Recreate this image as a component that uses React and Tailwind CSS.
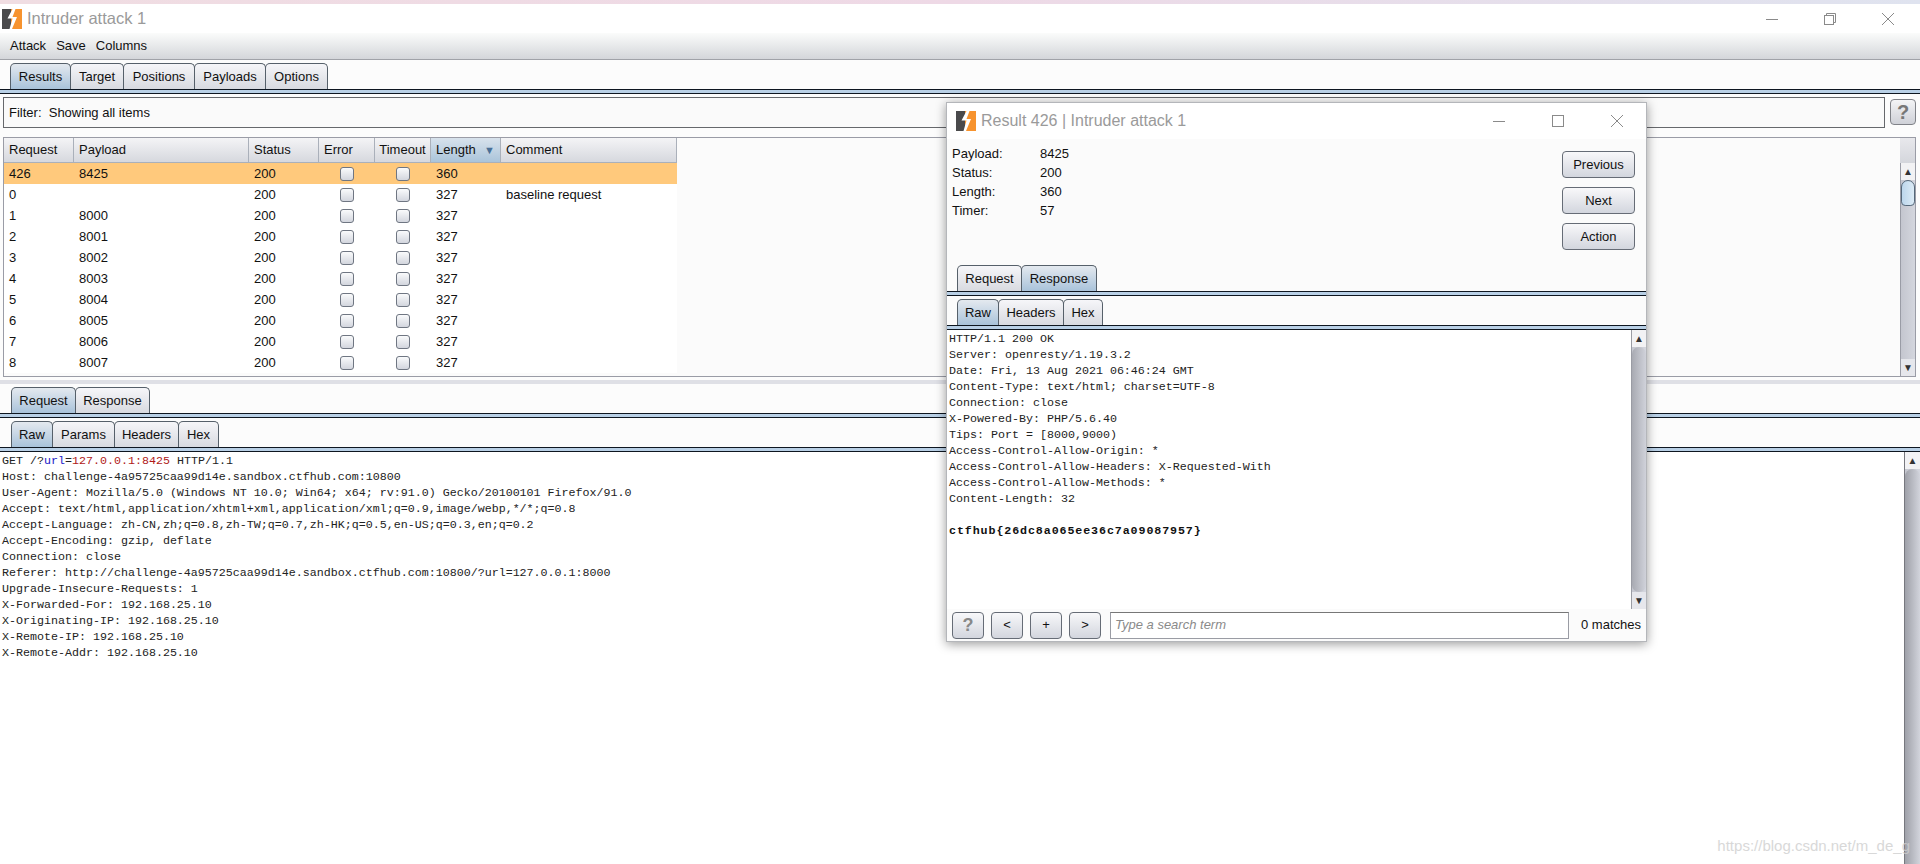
const sans = "font-['Liberation_Sans',Arial,sans-serif]";

function Logo({ className }) {
  return (
    <svg className={className} viewBox="0 0 20 20" aria-hidden="true">
      <rect x="0" y="0" width="9" height="20" fill="#4a4a4c" />
      <path d="M9 0H20V20H9Z" fill="#f7932e" />
      <path d="M10.5 0 L5.5 9.5 L10.5 9.5 L7.5 20 L10 20 L15 8 L10.5 8 L13.5 0 Z" fill="#fff" />
    </svg>
  );
}

function Ctrl({ kind }) {
  const s = "#8a8a8a";
  return (
    <svg width="14" height="14" viewBox="0 0 14 14" fill="none" stroke={s} strokeWidth="1" aria-hidden="true">
      {kind === "min" && <path d="M1 7.5H13" />}
      {kind === "max" && <rect x="1.5" y="1.5" width="11" height="11" />}
      {kind === "restore" && (
        <g>
          <rect x="1.5" y="3.5" width="9" height="9" />
          <path d="M3.5 3.5V1.5H12.5V10.5H10.5" />
        </g>
      )}
      {kind === "close" && <path d="M1 1L13 13M13 1L1 13" />}
    </svg>
  );
}

function Tab({ label, active, w }) {
  return (
    <div
      className={`${w} h-[26px] -mr-px border border-b-0 border-[#56606a] rounded-t-[5px] flex items-center justify-center text-[13px] text-[#111] ${
        active
          ? "bg-gradient-to-b from-[#e4e9ef] to-[#a9c3da]"
          : "bg-gradient-to-b from-[#f6f6f9] to-[#d8dae0]"
      }`}
    >
      {label}
    </div>
  );
}

function TabStrip({ tabs, pad }) {
  return (
    <div>
      <div className={`flex items-end ${pad}`}>
        {tabs.map((t) => (
          <Tab key={t.label} {...t} />
        ))}
      </div>
      <div className="h-[5px] bg-[#b9d0e6] border-y border-[#0e1620]" />
    </div>
  );
}

function Check() {
  return (
    <div className="w-[14px] h-[14px] rounded-[3px] border border-[#6f7682] bg-gradient-to-b from-[#fafbfc] to-[#d3d6de]" />
  );
}

function VScroll({ className, thumb, noBottom }) {
  return (
    <div className={`flex flex-col bg-gradient-to-r from-[#c4c6cf] to-[#d4d6de] ${className}`}>
      <div className="h-[17px] shrink-0 bg-[#f2f2f4] flex items-center justify-center text-[10px] leading-none text-[#333]">▲</div>
      {thumb}
      {!noBottom && (
        <div className="h-[17px] shrink-0 bg-[#e6e7ec] flex items-center justify-center text-[10px] leading-none text-[#333]">▼</div>
      )}
    </div>
  );
}

const rows = [
  ["0", "", "200", "327", "baseline request"],
  ["1", "8000", "200", "327", ""],
  ["2", "8001", "200", "327", ""],
  ["3", "8002", "200", "327", ""],
  ["4", "8003", "200", "327", ""],
  ["5", "8004", "200", "327", ""],
  ["6", "8005", "200", "327", ""],
  ["7", "8006", "200", "327", ""],
  ["8", "8007", "200", "327", ""],
];

const cols = "grid grid-cols-[70px_175px_70px_56px_56px_70px_176px] w-[673px]";

function HeadCell({ children, active, center }) {
  return (
    <div
      className={`h-[25px] flex items-center border-r border-b border-[#aab0ba] ${center ? "justify-center" : "pl-[5px]"} ${
        active
          ? "bg-gradient-to-b from-[#d8e2ec] to-[#aac4da] justify-between pr-[5px]"
          : "bg-gradient-to-b from-[#f4f4f6] to-[#d6d8de]"
      }`}
    >
      {children}
    </div>
  );
}

function Row({ r, selected }) {
  const c = "h-[21px] flex items-center pl-[5px]";
  return (
    <div className={`${cols} text-[13px] text-[#111] ${selected ? "bg-[#ffc97c]" : ""}`}>
      <div className={c}>{r[0]}</div>
      <div className={c}>{r[1]}</div>
      <div className={c}>{r[2]}</div>
      <div className="h-[21px] flex items-center justify-center"><Check /></div>
      <div className="h-[21px] flex items-center justify-center"><Check /></div>
      <div className={c}>{r[3]}</div>
      <div className={c}>{r[4]}</div>
    </div>
  );
}

function ToolBtn({ children, w, muted }) {
  return (
    <button
      className={`${w} h-[27px] rounded-[4px] border border-[#666c76] bg-gradient-to-b from-[#f8f8fa] to-[#d3d6de] flex items-center justify-center ${
        muted ? "text-[#888] font-bold text-[18px]" : "text-[13px] text-[#111]"
      }`}
    >
      {children}
    </button>
  );
}

const mono = "font-['Liberation_Mono','Courier_New',monospace] text-[11.67px] leading-[16px] text-[#222] whitespace-pre";

const respLines = [
  "HTTP/1.1 200 OK",
  "Server: openresty/1.19.3.2",
  "Date: Fri, 13 Aug 2021 06:46:24 GMT",
  "Content-Type: text/html; charset=UTF-8",
  "Connection: close",
  "X-Powered-By: PHP/5.6.40",
  "Tips: Port = [8000,9000)",
  "Access-Control-Allow-Origin: *",
  "Access-Control-Allow-Headers: X-Requested-With",
  "Access-Control-Allow-Methods: *",
  "Content-Length: 32",
  " ",
];

const reqLines = [
  "Host: challenge-4a95725caa99d14e.sandbox.ctfhub.com:10800",
  "User-Agent: Mozilla/5.0 (Windows NT 10.0; Win64; x64; rv:91.0) Gecko/20100101 Firefox/91.0",
  "Accept: text/html,application/xhtml+xml,application/xml;q=0.9,image/webp,*/*;q=0.8",
  "Accept-Language: zh-CN,zh;q=0.8,zh-TW;q=0.7,zh-HK;q=0.5,en-US;q=0.3,en;q=0.2",
  "Accept-Encoding: gzip, deflate",
  "Connection: close",
  "Referer: http://challenge-4a95725caa99d14e.sandbox.ctfhub.com:10800/?url=127.0.0.1:8000",
  "Upgrade-Insecure-Requests: 1",
  "X-Forwarded-For: 192.168.25.10",
  "X-Originating-IP: 192.168.25.10",
  "X-Remote-IP: 192.168.25.10",
  "X-Remote-Addr: 192.168.25.10",
];

function Popup() {
  return (
    <div className="absolute left-[946px] top-[102px] w-[701px] h-[540px] bg-[#fbfbfb] border border-[#b4b6ba] shadow-[0_2px_10px_rgba(0,0,0,0.4)] flex flex-col">
      <div className="h-[36px] shrink-0 bg-white flex items-center pl-[9px]">
        <Logo className="w-[20px] h-[20px]" />
        <span className="ml-[5px] text-[16px] text-[#9a9a9a]">Result 426 | Intruder attack 1</span>
        <div className="ml-auto flex items-center gap-[45px] pr-[22px]">
          <Ctrl kind="min" />
          <Ctrl kind="max" />
          <Ctrl kind="close" />
        </div>
      </div>
      <div className="h-[126px] shrink-0 flex justify-between pl-[5px] pr-[11px] pt-[5px] text-[13px] text-[#111]">
        <div className="grid grid-cols-[88px_auto] auto-rows-[19px] items-center h-[76px]">
          <span>Payload:</span><span>8425</span>
          <span>Status:</span><span>200</span>
          <span>Length:</span><span>360</span>
          <span>Timer:</span><span>57</span>
        </div>
        <div className="flex flex-col gap-[9px] pt-[7px]">
          <ToolBtn w="w-[73px]">Previous</ToolBtn>
          <ToolBtn w="w-[73px]">Next</ToolBtn>
          <ToolBtn w="w-[73px]">Action</ToolBtn>
        </div>
      </div>
      <TabStrip
        pad="pl-[10px]"
        tabs={[
          { label: "Request", w: "w-[65px]" },
          { label: "Response", active: true, w: "w-[76px]" },
        ]}
      />
      <div className="h-[3px] shrink-0" />
      <TabStrip
        pad="pl-[10px]"
        tabs={[
          { label: "Raw", active: true, w: "w-[42px]" },
          { label: "Headers", w: "w-[66px]" },
          { label: "Hex", w: "w-[40px]" },
        ]}
      />
      <div className="h-[279px] shrink-0 flex bg-white">
        <div className={`flex-1 pl-[2px] pt-px ${mono}`}>
          {respLines.map((l, i) => (
            <div key={i} className="h-[16px]">{l}</div>
          ))}
          <div className="font-bold text-[#111] tracking-[0.9px]">ctfhub{"{26dc8a065ee36c7a09087957}"}</div>
        </div>
        <VScroll
          className="w-[15px] border-l border-[#9a9ca4]"
          thumb={<div className="flex-1 rounded-t-[8px] rounded-b-[8px] bg-gradient-to-r from-[#a8aab2] to-[#d0d2da]" />}
        />
      </div>
      <div className="flex-1 flex items-center pl-[5px] pr-[5px] gap-[7px]">
        <ToolBtn w="w-[32px]" muted>?</ToolBtn>
        <ToolBtn w="w-[32px]">&lt;</ToolBtn>
        <ToolBtn w="w-[32px]">+</ToolBtn>
        <ToolBtn w="w-[32px]">&gt;</ToolBtn>
        <div className="ml-[2px] w-[459px] h-[27px] bg-white border border-[#9a9ca4] border-t-[#777] flex items-center pl-[4px] text-[13px] italic text-[#8a8a8a]">
          Type a search term
        </div>
        <span className="ml-[5px] text-[13px] text-[#111] whitespace-nowrap">0 matches</span>
      </div>
    </div>
  );
}

export default function App() {
  return (
    <div className={`relative w-[1920px] h-[864px] overflow-hidden bg-[#fcfcfc] ${sans}`}>
      <div className="h-[4px] bg-gradient-to-r from-[#f0dde2] via-[#eed9e6] to-[#dfe3ef]" />
      <div className="h-[29px] bg-white flex items-center pl-[2px]">
        <Logo className="w-[20px] h-[20px]" />
        <span className="ml-[5px] text-[16.5px] text-[#9a9a9a]">Intruder attack 1</span>
        <div className="ml-auto flex items-center gap-[44px] pr-[25px]">
          <Ctrl kind="min" />
          <Ctrl kind="restore" />
          <Ctrl kind="close" />
        </div>
      </div>
      <div className="h-[27px] bg-gradient-to-b from-[#fbfcfb] to-[#d4d6da] border-b border-[#a0a2a8] flex items-center pl-[10px] gap-[10px] text-[13px] text-[#111]">
        <span>Attack</span>
        <span>Save</span>
        <span>Columns</span>
      </div>
      <TabStrip
        pad="pl-[10px] pt-[3px]"
        tabs={[
          { label: "Results", active: true, w: "w-[61px]" },
          { label: "Target", w: "w-[54px]" },
          { label: "Positions", w: "w-[72px]" },
          { label: "Payloads", w: "w-[72px]" },
          { label: "Options", w: "w-[63px]" },
        ]}
      />
      <div className="mt-[3px] h-[32px] flex pl-[3px] pr-[4px]">
        <div className="w-[1882px] h-[31px] border border-[#66686c] bg-[#fafafa] flex items-center pl-[5px] text-[13px] text-[#111]">
          Filter:&nbsp; Showing all items
        </div>
        <div className="ml-[5px] mt-[2px] w-[26px] h-[26px] rounded-[4px] border border-[#808288] bg-gradient-to-b from-[#f4f4f6] to-[#cfd1d8] flex items-center justify-center text-[20px] font-bold text-[#777]">
          ?
        </div>
      </div>
      <div className="ml-[3px] mt-[8px] w-[1913px] h-[240px] border border-[#9a9ca6] bg-[#fbfbfb] flex">
        <div className="w-[1897px] pl-0">
          <div className={`${cols} text-[13px] text-[#111]`}>
            <HeadCell>Request</HeadCell>
            <HeadCell>Payload</HeadCell>
            <HeadCell>Status</HeadCell>
            <HeadCell>Error</HeadCell>
            <HeadCell center>Timeout</HeadCell>
            <HeadCell active>
              <span>Length</span>
              <span className="text-[11px] text-[#4a6f96]">▼</span>
            </HeadCell>
            <HeadCell>Comment</HeadCell>
          </div>
          <div className="w-[673px] bg-white">
            <Row selected r={["426", "8425", "200", "360", ""]} />
            {rows.map((r) => (
              <Row key={r[0]} r={r} />
            ))}
          </div>
        </div>
        <div className="w-[15px] flex flex-col">
          <div className="h-[25px] shrink-0 bg-gradient-to-b from-[#e8e8ec] to-[#d4d6dc]" />
          <VScroll
            className="flex-1 border-l border-[#9a9ca6]"
            thumb={
              <>
                <div className="h-[26px] rounded-t-[10px] rounded-b-[6px] bg-gradient-to-r from-[#bcd6ec] to-[#dcebf6] border border-[#55687a]" />
                <div className="flex-1" />
              </>
            }
          />
        </div>
      </div>
      <div className="mt-[3px] h-[4px] bg-[#dfe0e6]" />
      <div className="h-[3px]" />
      <TabStrip
        pad="pl-[11px]"
        tabs={[
          { label: "Request", active: true, w: "w-[65px]" },
          { label: "Response", w: "w-[75px]" },
        ]}
      />
      <div className="h-[3px]" />
      <TabStrip
        pad="pl-[11px]"
        tabs={[
          { label: "Raw", active: true, w: "w-[42px]" },
          { label: "Params", w: "w-[63px]" },
          { label: "Headers", w: "w-[65px]" },
          { label: "Hex", w: "w-[41px]" },
        ]}
      />
      <div className="h-[413px] flex bg-white">
        <div className={`flex-1 pl-[2px] pt-px ${mono}`}>
          <div>
            GET /?<span className="text-[#1a1ac8]">url</span>=<span className="text-[#b01818]">127.0.0.1:8425</span> HTTP/1.1
          </div>
          {reqLines.map((l) => (
            <div key={l}>{l}</div>
          ))}
        </div>
        <VScroll
          noBottom
          className="w-[16px] border-l border-[#77787e]"
          thumb={<div className="flex-1 rounded-t-[8px] bg-gradient-to-r from-[#9fa1a9] to-[#d2d4dc]" />}
        />
      </div>
      <Popup />
      <div className="absolute right-[10px] bottom-[9px] text-[15px] leading-[18px] text-[#cfcfcf] opacity-80 whitespace-nowrap">
        https://blog.csdn.net/m_de_g
      </div>
    </div>
  );
}
